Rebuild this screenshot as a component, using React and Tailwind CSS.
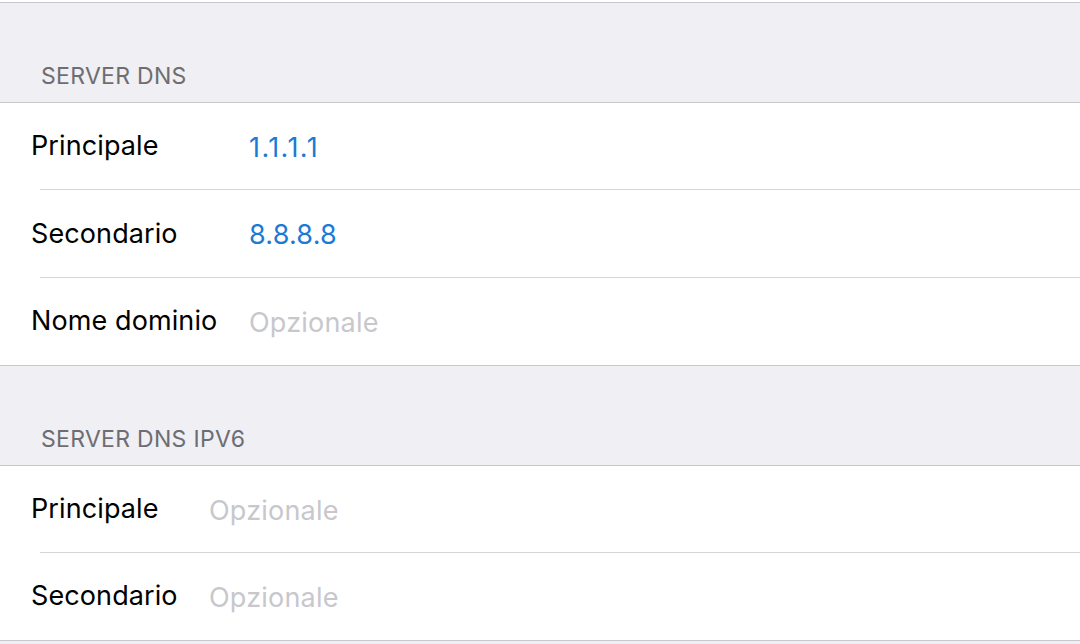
export default function App() {
  const font = { fontFamily: 'Inter, "Liberation Sans", sans-serif' };
  const Row = ({ label, value, placeholder, valueX, h, sep, wide }) => (
    <div className={"relative flex items-center bg-white " + h}>
      <div className="pl-[31px] text-[27px] text-black tracking-[0.1px]" style={{ width: valueX }}>
        {label}
      </div>
      <div
        className={
          "text-[27px] pt-[3px] " +
          (wide ? "tracking-[1.4px] " : "tracking-[0.2px] ") +
          (placeholder ? "text-[#c7c7cc]" : "text-[#1a7bd4]")
        }
      >
        {value}
      </div>
      {sep && <div className="absolute bottom-0 left-[40px] right-0 h-px bg-[#d4d4d8]" />}
    </div>
  );
  return (
    <div className="w-[1080px] h-[644px] overflow-hidden bg-[#efeff4]" style={font}>
      <div className="h-[2px] bg-white" />
      <div className="border-t border-[#c8c7cc] h-[100px] flex items-end pb-[9px] pl-[41px] text-[23px] text-[#6d6d72] tracking-[0.3px]">
        SERVER DNS
      </div>
      <div className="border-y border-[#c8c7cc]">
        <Row label="Principale" value="1.1.1.1" valueX={249} h="h-[87px]" sep wide />
        <Row label="Secondario" value="8.8.8.8" valueX={249} h="h-[88px]" sep />
        <Row label="Nome dominio" value="Opzionale" placeholder valueX={249} h="h-[87px]" />
      </div>
      <div className="h-[99px] flex items-end pb-[9px] pl-[41px] text-[23px] text-[#6d6d72] tracking-[0.3px]">
        SERVER DNS IPV6
      </div>
      <div className="border-y border-[#c8c7cc]">
        <Row label="Principale" value="Opzionale" placeholder valueX={209} h="h-[87px]" sep />
        <Row label="Secondario" value="Opzionale" placeholder valueX={209} h="h-[87px]" />
      </div>
    </div>
  );
}
